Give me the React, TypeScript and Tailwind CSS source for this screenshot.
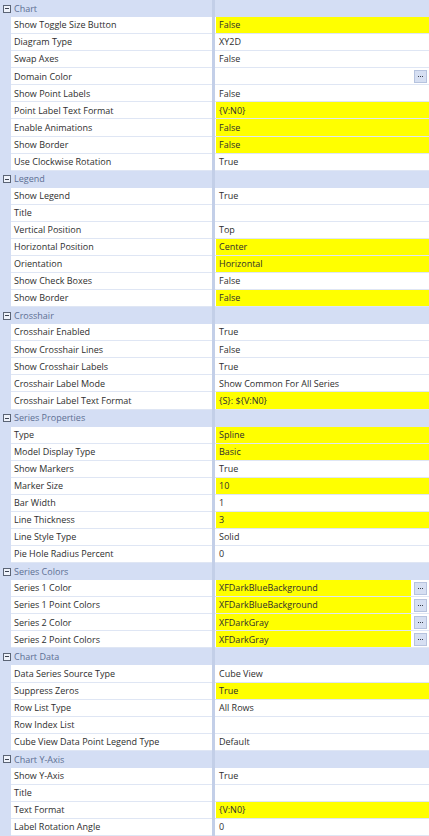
import React from 'react';

type Prop = {
  name: string;
  value?: string;
  changed?: boolean;
  picker?: boolean;
};

type Group = {
  title: string;
  items: Prop[];
};

const groups: Group[] = [
  {
    title: 'Chart',
    items: [
      { name: 'Show Toggle Size Button', value: 'False', changed: true },
      { name: 'Diagram Type', value: 'XY2D' },
      { name: 'Swap Axes', value: 'False' },
      { name: 'Domain Color', value: '', picker: true },
      { name: 'Show Point Labels', value: 'False' },
      { name: 'Point Label Text Format', value: '{V:N0}', changed: true },
      { name: 'Enable Animations', value: 'False', changed: true },
      { name: 'Show Border', value: 'False', changed: true },
      { name: 'Use Clockwise Rotation', value: 'True' },
    ],
  },
  {
    title: 'Legend',
    items: [
      { name: 'Show Legend', value: 'True' },
      { name: 'Title', value: '' },
      { name: 'Vertical Position', value: 'Top' },
      { name: 'Horizontal Position', value: 'Center', changed: true },
      { name: 'Orientation', value: 'Horizontal', changed: true },
      { name: 'Show Check Boxes', value: 'False' },
      { name: 'Show Border', value: 'False', changed: true },
    ],
  },
  {
    title: 'Crosshair',
    items: [
      { name: 'Crosshair Enabled', value: 'True' },
      { name: 'Show Crosshair Lines', value: 'False' },
      { name: 'Show Crosshair Labels', value: 'True' },
      { name: 'Crosshair Label Mode', value: 'Show Common For All Series' },
      { name: 'Crosshair Label Text Format', value: '{S}: ${V:N0}', changed: true },
    ],
  },
  {
    title: 'Series Properties',
    items: [
      { name: 'Type', value: 'Spline', changed: true },
      { name: 'Model Display Type', value: 'Basic', changed: true },
      { name: 'Show Markers', value: 'True' },
      { name: 'Marker Size', value: '10', changed: true },
      { name: 'Bar Width', value: '1' },
      { name: 'Line Thickness', value: '3', changed: true },
      { name: 'Line Style Type', value: 'Solid' },
      { name: 'Pie Hole Radius Percent', value: '0' },
    ],
  },
  {
    title: 'Series Colors',
    items: [
      { name: 'Series 1 Color', value: 'XFDarkBlueBackground', changed: true, picker: true },
      { name: 'Series 1 Point Colors', value: 'XFDarkBlueBackground', changed: true, picker: true },
      { name: 'Series 2 Color', value: 'XFDarkGray', changed: true, picker: true },
      { name: 'Series 2 Point Colors', value: 'XFDarkGray', changed: true, picker: true },
    ],
  },
  {
    title: 'Chart Data',
    items: [
      { name: 'Data Series Source Type', value: 'Cube View' },
      { name: 'Suppress Zeros', value: 'True', changed: true },
      { name: 'Row List Type', value: 'All Rows' },
      { name: 'Row Index List', value: '' },
      { name: 'Cube View Data Point Legend Type', value: 'Default' },
    ],
  },
  {
    title: 'Chart Y-Axis',
    items: [
      { name: 'Show Y-Axis', value: 'True' },
      { name: 'Title', value: '' },
      { name: 'Text Format', value: '{V:N0}', changed: true },
      { name: 'Label Rotation Angle', value: '0' },
    ],
  },
];

function CollapseIcon() {
  return (
    <span className="w-[8px] h-[8px] border border-[#5b6475] flex items-center justify-center bg-[#eef2fa]">
      <span className="w-[4px] h-px bg-[#3b4250]" />
    </span>
  );
}

// small "..." editor button at the end of colour rows
function EllipsisButton() {
  return (
    <button className="w-[13px] h-[13px] bg-[#d6dff2] border border-[#b6c3de] flex items-center justify-center gap-px">
      <span className="w-px h-px bg-[#3a3f4a]" />
      <span className="w-px h-px bg-[#3a3f4a]" />
      <span className="w-px h-px bg-[#3a3f4a]" />
    </button>
  );
}

function GroupHeader({ title }: { title: string }) {
  return (
    <div className="flex-1 min-h-0 flex">
      <div className="w-[212px] flex items-center pl-[3px] gap-[3px]">
        <CollapseIcon />
        <span className="text-[#5d6f93]">{title}</span>
      </div>
      <div className="w-[3px] bg-[#c3cfe8]" />
      <div className="flex-1" />
    </div>
  );
}

function PropRow({ item }: { item: Prop }) {
  return (
    <div className="flex-1 min-h-0 flex">
      <div className="w-[11px]" />
      <div className="w-[201px] bg-white border-b border-[#dfe6f4] flex items-center pl-[3px] text-[#2e2e2e] whitespace-nowrap overflow-hidden">
        {item.name}
      </div>
      <div className="w-[3px] bg-[#c3cfe8]" />
      <div className="flex-1 bg-white border-b border-[#dfe6f4] flex pl-px">
        <div
          className={`flex-1 flex items-center pl-[3px] text-[#2e2e2e] whitespace-nowrap ${
            item.changed ? 'bg-[#ffff00]' : ''
          }`}
        >
          {item.value}
        </div>
        {item.picker && (
          <div className="w-[18px] flex items-center justify-center">
            <EllipsisButton />
          </div>
        )}
      </div>
    </div>
  );
}

export default function App() {
  return (
    <div
      className="w-[429px] h-[836px] bg-[#d4def4] flex flex-col text-[9px] overflow-hidden"
      style={{ fontFamily: '"Open Sans", "Noto Sans", sans-serif' }}
    >
      {groups.map((g) => (
        <React.Fragment key={g.title}>
          <GroupHeader title={g.title} />
          {g.items.map((item, i) => (
            <PropRow key={g.title + i} item={item} />
          ))}
        </React.Fragment>
      ))}
    </div>
  );
}
